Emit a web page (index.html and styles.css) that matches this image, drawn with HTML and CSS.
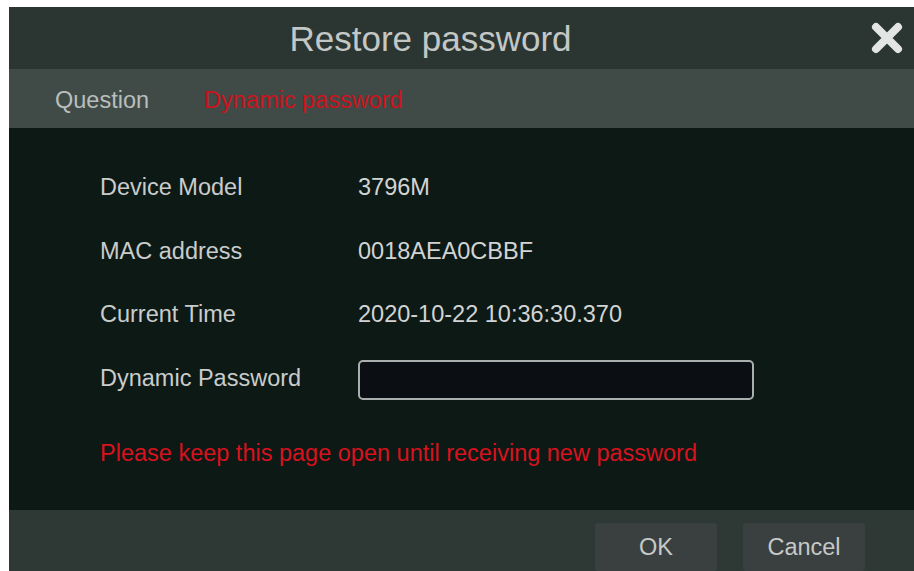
FILE: index.html
```html
<!DOCTYPE html>
<html lang="en">
<head>
<meta charset="utf-8">
<title>Restore password</title>
<link rel="stylesheet" href="styles.css">
</head>
<body>
<div class="dialog">
  <header class="dialog-head">
    <h1 class="dialog-title">Restore password</h1>
    <button class="close-btn" type="button" aria-label="Close">
      <svg width="34" height="32" viewBox="0 0 34 32">
        <path d="M6 5 L28 27 M28 5 L6 27" stroke="#e3e5e4" stroke-width="8" stroke-linecap="round" fill="none"/>
      </svg>
    </button>
  </header>
  <nav class="tabs">
    <span class="tab">Question</span>
    <span class="tab tab-active">Dynamic password</span>
  </nav>
  <main class="dialog-body">
    <div class="info-grid">
      <span class="label">Device Model</span>
      <span class="value">3796M</span>
      <span class="label">MAC address</span>
      <span class="value">0018AEA0CBBF</span>
      <span class="label">Current Time</span>
      <span class="value">2020-10-22 10:36:30.370</span>
      <span class="label">Dynamic Password</span>
      <span class="value"><input class="pw-input" type="text"></span>
    </div>
    <p class="warning">Please keep this page open until receiving new password</p>
  </main>
  <footer class="dialog-foot">
    <button class="btn" type="button">OK</button>
    <button class="btn" type="button">Cancel</button>
  </footer>
</div>
</body>
</html>
```
FILE: styles.css
```css
html, body {
  margin: 0;
  padding: 0;
  background: #ffffff;
}

body {
  font-family: "Liberation Sans", Arial, sans-serif;
  padding: 7px 0 0 9px;
}

.dialog {
  width: 905px;
  height: 564px;
  display: flex;
  flex-direction: column;
  background: #0d1915;
  overflow: hidden;
}

.dialog-head {
  height: 62px;
  flex: none;
  display: flex;
  align-items: center;
  background: #2b3632;
}

.dialog-title {
  flex: 1;
  margin: 0;
  text-align: center;
  font-weight: normal;
  font-size: 35px;
  color: #c3c7c5;
  line-height: 1;
}

.close-btn {
  width: 62px;
  height: 62px;
  flex: none;
  display: flex;
  align-items: center;
  justify-content: center;
  padding: 0 0 0 8px;
  border: 0;
  background: transparent;
}

.tabs {
  height: 59px;
  flex: none;
  display: flex;
  align-items: center;
  gap: 55px;
  padding: 3px 0 0 46px;
  box-sizing: border-box;
  background: #404b47;
}

.tab {
  font-size: 23.5px;
  color: #b9bebc;
}

.tab-active {
  color: #cc121c;
}

.dialog-body {
  flex: 1;
  padding: 28px 0 0 91px;
  background: #0d1915;
}

.info-grid {
  display: grid;
  grid-template-columns: 258px 396px;
  grid-auto-rows: 63.5px;
  align-items: center;
}

.label,
.value {
  font-size: 23.5px;
  color: #c9cccb;
}

.value {
  color: #d2d4d3;
  display: flex;
  align-items: center;
}

.pw-input {
  width: 396px;
  height: 40px;
  box-sizing: border-box;
  margin: 3px 0 0;
  border: 2px solid #a9afad;
  border-radius: 5px;
  background: #0b0f14;
  outline: none;
}

.warning {
  margin: 28px 0 0;
  line-height: 30px;
  font-size: 23.5px;
  color: #d8121e;
}

.dialog-foot {
  height: 61px;
  flex: none;
  display: flex;
  justify-content: flex-end;
  gap: 26px;
  padding: 13px 49px 0 0;
  box-sizing: border-box;
  background: #2e3935;
}

.btn {
  width: 122px;
  height: 48px;
  border: 0;
  border-radius: 3px;
  background: #3a403f;
  color: #c5c9c7;
  font-family: "Liberation Sans", Arial, sans-serif;
  font-size: 23.5px;
  padding: 0;
}
```
